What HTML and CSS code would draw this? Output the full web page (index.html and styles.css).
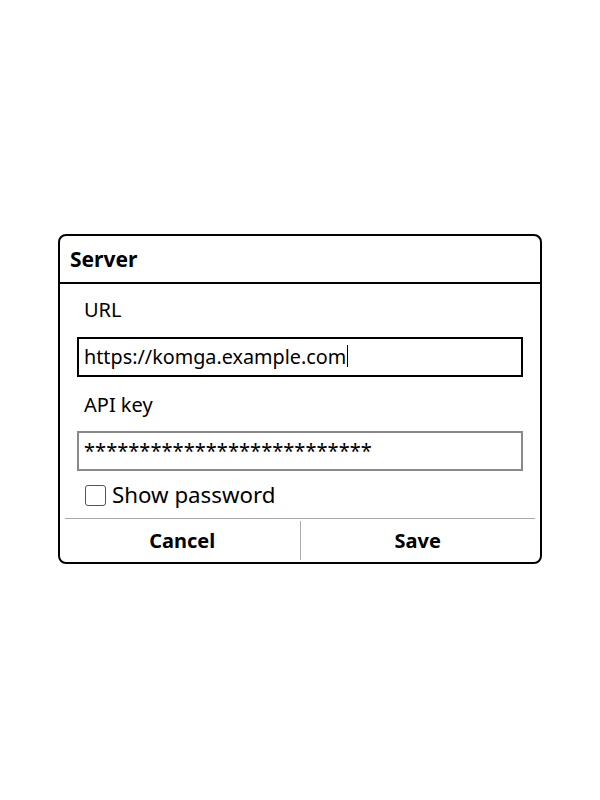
FILE: index.html
```html
<!DOCTYPE html>
<html>
<head>
<meta charset="utf-8">
<link rel="stylesheet" href="styles.css">
</head>
<body>
<div class="dialog">
  <div class="title">Server</div>
  <div class="body">
    <div class="label label-url">URL</div>
    <div class="input input-active"><span class="value">https://komga.example.com</span><span class="cursor"></span></div>
    <div class="label label-key">API key</div>
    <div class="input input-idle"><span class="value stars">**************************</span></div>
    <div class="check-row">
      <span class="checkbox"></span>
      <span class="check-text">Show password</span>
    </div>
  </div>
  <div class="footer">
    <div class="btn">Cancel</div>
    <div class="sep"></div>
    <div class="btn">Save</div>
  </div>
</div>
</body>
</html>
```
FILE: styles.css
```css
* { box-sizing: border-box; }
html, body { margin: 0; padding: 0; background: #fff; }
body {
  font-family: "Noto Sans", "DejaVu Sans", sans-serif;
  color: #000;
  width: 600px;
  height: 800px;
}
.dialog {
  width: 484px;
  margin: 234px auto 0;
  border: 2px solid #000;
  border-radius: 8px;
}
.title {
  height: 48px;
  line-height: 46px;
  padding-left: 10px;
  font-size: 21px;
  font-weight: bold;
  border-bottom: 2px solid #000;
}
.body {
  padding: 14px 17px 0 17px;
}
.label {
  font-size: 20px;
  line-height: 23px;
  padding-left: 7px;
}
.label-key { margin-top: 16px; }
.input {
  height: 40px;
  margin-top: 16px;
  padding: 0 5px;
  font-size: 19.8px;
  line-height: 36px;
  white-space: nowrap;
  overflow: hidden;
}
.label-key + .input { margin-top: 15px; }
.input-active { border: 2px solid #000; }
.input-idle { border: 2px solid #8a8a8a; }
.stars { font-size: 20.1px; }
.cursor {
  display: inline-block;
  width: 1px;
  height: 22px;
  background: #000;
  margin-left: 1px;
  vertical-align: -3px;
}
.check-row {
  display: flex;
  align-items: flex-start;
  margin-top: 8px;
  height: 30px;
  padding-left: 8px;
}
.checkbox {
  width: 21px;
  height: 21px;
  margin-top: 6px;
  border: 1px solid #555;
  border-radius: 3px;
  flex: none;
}
.check-text {
  margin-left: 6px;
  font-size: 22.3px;
  line-height: 31px;
}
.footer {
  display: flex;
  margin: 9px 5px 0;
  border-top: 1px solid #aaa;
  height: 44px;
}
.btn {
  flex: 1;
  text-align: center;
  font-size: 20px;
  font-weight: bold;
  line-height: 43px;
}
.sep {
  width: 1px;
  background: #aaa;
  margin: 2px 0;
}
```
